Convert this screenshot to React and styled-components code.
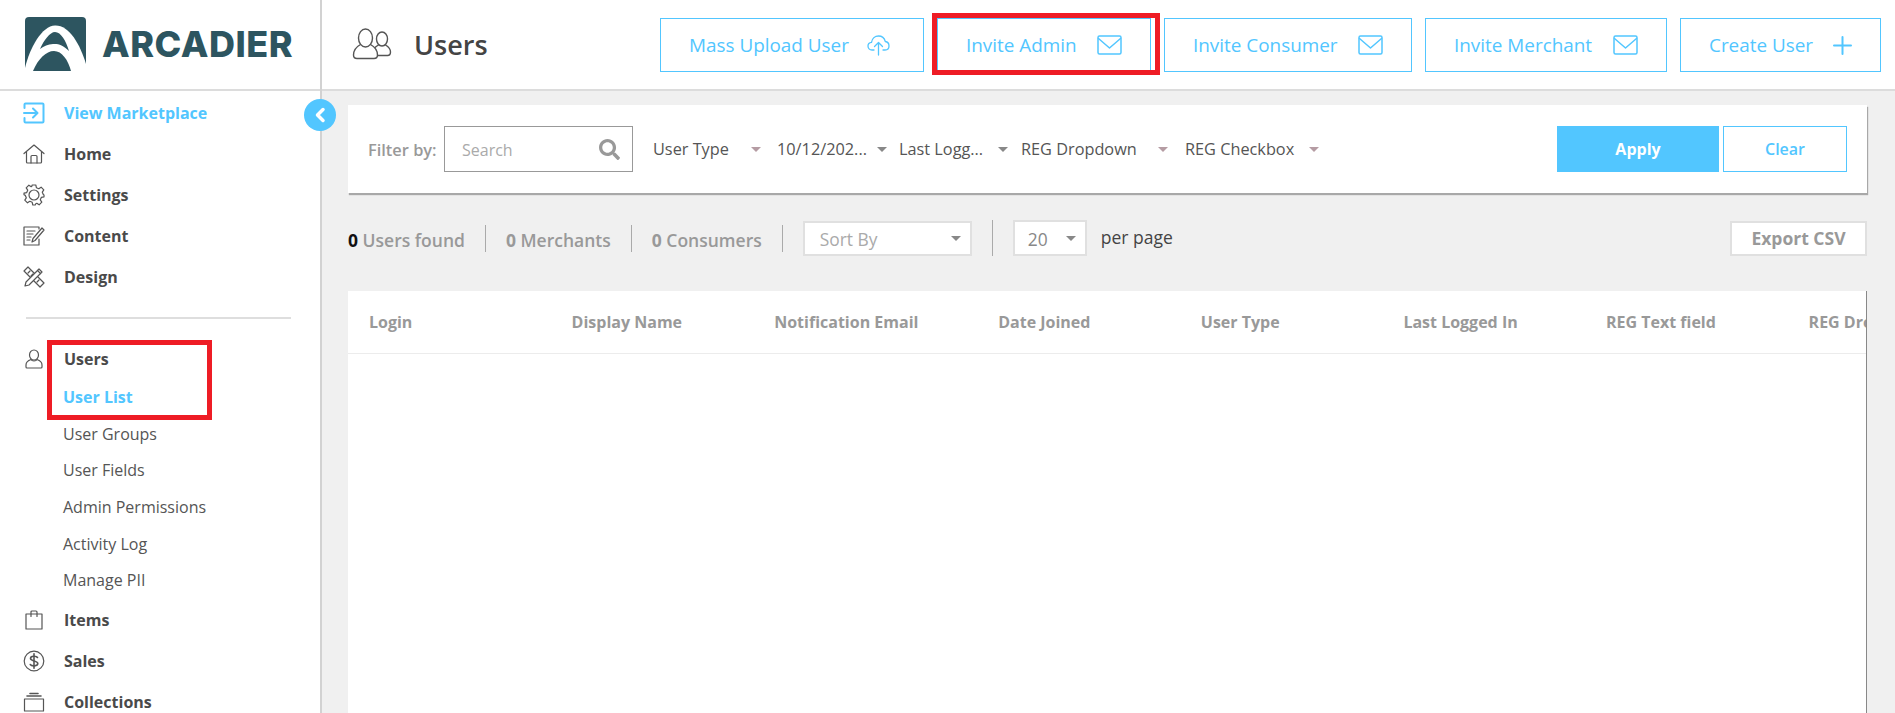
import React from 'react';
import styled, { createGlobalStyle } from 'styled-components';
import { FaSearch } from 'react-icons/fa';

const BLUE = '#52c6ff';

const GlobalStyle = createGlobalStyle`
  html, body {
    margin: 0;
    padding: 0;
    height: 100%;
    overflow: hidden;
    background: #f0f0f0;
    font-family: "Open Sans", "Liberation Sans", sans-serif;
  }
`;

const Page = styled.div`
  position: relative;
  display: grid;
  grid-template-columns: 322px 1fr;
  width: 1895px;
  height: 713px;
  overflow: hidden;
`;

const Sidebar = styled.aside`
  background: #fff;
  border-right: 2px solid #d2d2d2;
  box-sizing: border-box;
  overflow: hidden;
`;

const LogoBar = styled.div`
  display: flex;
  align-items: center;
  gap: 16px;
  height: 91px;
  padding: 0 0 1px 25px;
  box-sizing: border-box;
  border-bottom: 2px solid #dcdcdc;
`;

const LogoText = styled.span`
  font-family: Inter, "Liberation Sans", sans-serif;
  font-size: 36px;
  font-weight: 800;
  letter-spacing: 0.5px;
  color: #2d5560;
  line-height: 1;
`;

const Nav = styled.nav`
  display: flex;
  flex-direction: column;
  padding-top: 1px;
`;

const NavRow = styled.div`
  display: flex;
  align-items: center;
  height: 41px;
  font-size: 16px;
  font-weight: 700;
  color: ${props => (props.$active ? BLUE : '#4a4a4a')};
`;

const NavIcon = styled.span`
  display: flex;
  justify-content: center;
  width: 40px;
  margin: 0 10px 0 14px;
  color: ${props => (props.$active ? BLUE : '#555')};
`;

const Divider = styled.div`
  height: 2px;
  margin: 20px 29px 19px 26px;
  background: #dedede;
`;

const SubList = styled.div`
  display: flex;
  flex-direction: column;
  margin: 0 0 1px;
`;

const SubRow = styled.div`
  display: flex;
  align-items: center;
  height: 36.6px;
  padding-left: 63px;
  font-size: 16px;
  font-weight: ${props => (props.$active ? 700 : 400)};
  color: ${props => (props.$active ? BLUE : '#555')};
`;

const Main = styled.main`
  display: flex;
  flex-direction: column;
  min-width: 0;
`;

const TopBar = styled.header`
  display: flex;
  align-items: center;
  height: 91px;
  padding: 0 14px 1px 30px;
  box-sizing: border-box;
  background: #fff;
  border-bottom: 2px solid #dcdcdc;
  color: #555;
`;

const PageTitle = styled.h1`
  margin: 0 0 0 22px;
  font-size: 27px;
  font-weight: 600;
  color: #444;
`;

const TopActions = styled.div`
  display: flex;
  gap: 13px;
  margin-left: auto;
  padding-top: 1px;
`;

const OutlineButton = styled.button`
  display: flex;
  align-items: center;
  justify-content: space-between;
  width: ${props => props.$w}px;
  height: 54px;
  padding: 1px ${props => props.$pr || 28}px 0 28px;
  box-sizing: border-box;
  background: #fff;
  border: 1px solid ${BLUE};
  font-family: inherit;
  font-size: 18.9px;
  color: ${BLUE};
`;

const Content = styled.div`
  display: flex;
  flex-direction: column;
  flex: 1;
  padding: 14px 28px 0 26px;
`;

const FilterPanel = styled.section`
  display: flex;
  align-items: center;
  height: 88px;
  padding: 0 20px;
  box-sizing: border-box;
  background: #fff;
  box-shadow: 1px 2px 1px #a8a8a8;
`;

const FilterLabel = styled.span`
  width: 76px;
  font-size: 16.4px;
  font-weight: 600;
  color: #999;
`;

const SearchBox = styled.div`
  display: flex;
  align-items: center;
  justify-content: space-between;
  width: 189px;
  height: 46px;
  margin-right: 20px;
  padding: 1px 12px 0 17px;
  box-sizing: border-box;
  border: 1px solid #999;
  font-size: 16px;
  color: #aaa;
  svg {
    color: #999;
    font-size: 21px;
  }
`;

const FilterSelect = styled.div`
  display: flex;
  align-items: center;
  width: ${props => props.$w}px;
  font-size: 16.3px;
  color: #555;
  span:first-child {
    width: ${props => props.$text}px;
    white-space: nowrap;
  }
`;

const Caret = styled.i`
  display: block;
  width: 0;
  height: 0;
  border-left: 5px solid transparent;
  border-right: 5px solid transparent;
  border-top: 5px solid ${props => props.$color || '#888'};
`;

const FilterButtons = styled.div`
  display: flex;
  gap: 4px;
  margin-left: auto;
`;

const ApplyButton = styled.button`
  width: 162px;
  height: 46px;
  border: none;
  background: ${BLUE};
  color: #fff;
  font-family: inherit;
  font-size: 16px;
  font-weight: 700;
`;

const ClearButton = styled.button`
  width: 124px;
  height: 46px;
  background: #fff;
  border: 1px solid ${BLUE};
  box-sizing: border-box;
  color: ${BLUE};
  font-family: inherit;
  font-size: 16px;
  font-weight: 600;
`;

const StatsBar = styled.div`
  display: flex;
  align-items: center;
  height: 36px;
  margin-top: 27px;
`;

const Stat = styled.span`
  margin-top: 4px;
  font-size: 17.5px;
  font-weight: 600;
  color: #999;
  b {
    font-weight: 700;
    color: ${props => (props.$dark ? '#111' : '#999')};
  }
`;

const VLine = styled.span`
  width: 1px;
  height: ${props => props.$h}px;
  margin: 0 ${props => props.$gap}px;
  background: #aaa;
`;

const Dropdown = styled.div`
  display: flex;
  align-items: center;
  justify-content: space-between;
  width: ${props => props.$w}px;
  height: ${props => props.$h}px;
  padding: 1px 9px 0 ${props => props.$pad}px;
  box-sizing: border-box;
  background: #fff;
  border: 2px solid #e0e0e0;
  font-size: 17.4px;
  color: ${props => props.$color || '#aaa'};
`;

const PerPage = styled.span`
  margin-left: 14px;
  margin-top: -2px;
  font-size: 17.5px;
  font-weight: 500;
  color: #444;
`;

const ExportButton = styled.button`
  width: 137px;
  height: 35px;
  margin-left: auto;
  background: #fff;
  border: 2px solid #e0e0e0;
  font-family: inherit;
  font-size: 17.5px;
  font-weight: 700;
  color: #999;
`;

const TablePanel = styled.section`
  flex: 1;
  margin-top: 35px;
  background: #fff;
  border-right: 1px solid #888;
  overflow: hidden;
`;

const TableHead = styled.div`
  display: grid;
  grid-template-columns: 202.6px 202.6px 224px repeat(5, 202.6px);
  align-items: center;
  height: 62px;
  padding-left: 21px;
  border-bottom: 1px solid #ececec;
  font-size: 16px;
  font-weight: 700;
  color: #999;
  white-space: nowrap;
`;

const RedBox = styled.div`
  position: absolute;
  left: ${props => props.$x}px;
  top: ${props => props.$y}px;
  width: ${props => props.$w}px;
  height: ${props => props.$h}px;
  box-sizing: border-box;
  border: 5px solid #ee1c25;
  pointer-events: none;
`;

const CollapseToggle = styled.div`
  position: absolute;
  left: 304px;
  top: 99px;
  display: flex;
  align-items: center;
  justify-content: center;
  width: 32px;
  height: 32px;
  border-radius: 50%;
  background: ${BLUE};
`;

const Line = ({ size = 26, w, h, sw = 1.2, children }) => (
  <svg
    width={w || size}
    height={h || size}
    viewBox={`0 0 ${w || size} ${h || size}`}
    fill="none"
    stroke="currentColor"
    strokeWidth={sw}
    strokeLinecap="round"
    strokeLinejoin="round"
  >
    {children}
  </svg>
);

const LogoMark = () => (
  <svg width="61" height="54" viewBox="0 0 61 54">
    <path d="M4 0H57Q61 0 61 4V54H0V4Q0 0 4 0Z" fill="#2d5560" />
    <path d="M0 51C5 30 17 9 30 8.500C44 8 55 27 61 47V54H0Z" fill="#fff" />
    <path d="M15 32C19 23 25 15 30 15C36 15 41 24 44 34C38 28 33 26.500 28 27C23 27.500 19 29 15 32Z" fill="#2d5560" />
    <path d="M8 54C13 42 21 34 29 34C37 34 43 43 46 54Z" fill="#2d5560" />
  </svg>
);

const MarketIcon = () => (
  <Line w={22} h={22} sw={2}>
    <path d="M1.500 6V2.500Q1.500 1.500 2.500 1.500H19.500Q20.500 1.500 20.500 2.500V19.500Q20.500 20.500 19.500 20.500H2.500Q1.500 20.500 1.500 19.500V16" />
    <path d="M1 11H14M10 6.500L14.500 11L10 15.500" />
  </Line>
);

const HomeIcon = () => (
  <Line w={22} h={20}>
    <path d="M1 9.500L11 1L21 9.500M3.500 7.500V18Q3.500 19 4.500 19H17.500Q18.500 19 18.500 18V7.500" />
    <path d="M8 19V12.500Q8 11.500 9 11.500H13Q14 11.500 14 12.500V19" />
  </Line>
);

const GearIcon = () => (
  <Line size={22}>
    <circle cx="11" cy="11" r="5" />
    <path d="M9.200 1H12.800L13.400 3.700L15.800 4.700L18.100 3.200L20.800 5.900L19.300 8.200L20.300 10.600L21 11V12.800L18.300 13.400L17.300 15.800L18.800 18.100L16.100 20.800L13.800 19.300L12.800 19.700L12.200 21H9.800L9.200 18.300L6.800 17.300L4.500 18.800L1.800 16.100L3.300 13.800L2.300 11.400L1 10.800V9.200L3.700 8.600L4.700 6.200L3.200 3.900L5.900 1.200L8.200 2.700L8.800 2.300Z" />
  </Line>
);

const ContentIcon = () => (
  <Line w={22} h={20}>
    <path d="M16 13V19H1V1H16V3" />
    <path d="M4 5H12M4 8H10M4 11H8M4 14H7" />
    <path d="M9 16L10 12.500L19 2L21 4L12 14.500Z" />
  </Line>
);

const DesignIcon = () => (
  <Line w={22} h={22}>
    <path d="M1 5L5 1L21 17L17 21Z" />
    <path d="M5 7L7 5M8 10L10 8M11 13L13 11M14 16L16 14" />
    <path d="M3 16L16 3L19 6L6 19L2 20Z" fill="#fff" />
    <path d="M14.500 4.500L17.500 7.500" />
  </Line>
);

const UserIcon = () => (
  <Line w={18} h={20}>
    <ellipse cx="9" cy="6" rx="4.500" ry="5" />
    <path d="M6 10.500C3 11.500 1 13 1 16V18Q1 19 2 19H16Q17 19 17 18V16C17 13 15 11.500 12 10.500C11 12.500 7 12.500 6 10.500Z" />
  </Line>
);

const BagIcon = () => (
  <Line w={18} h={20}>
    <path d="M1 4H17V19H1Z" />
    <path d="M6 6.500V2Q6 1 7 1H11Q12 1 12 2V6.500" />
  </Line>
);

const DollarIcon = () => (
  <Line size={22}>
    <circle cx="11" cy="11" r="9.800" />
    <path d="M14.500 7.500C13.500 5.800 7.500 5.500 7.500 8.500C7.500 11.500 14.800 10.300 14.800 13.500C14.800 16.500 8.500 16.500 7.300 14.500" strokeWidth="1.600" />
    <path d="M11 3.800V18.200" strokeWidth="1.600" />
  </Line>
);

const CollectionIcon = () => (
  <Line w={22} h={20}>
    <path d="M1.500 7H20.500V19H1.500Z" />
    <path d="M4 4H18M7 1.500H15" strokeWidth="1.600" />
  </Line>
);

const UsersTitleIcon = () => (
  <Line w={40} h={32} sw={1.400}>
    <ellipse cx="13.500" cy="10" rx="7" ry="9" />
    <path d="M8.500 16.500C4 19 1.500 22 1.500 27Q1.500 30.500 5 30.500H22Q25.500 30.500 25.500 27C25.500 22 23 19 18.500 16.500" />
    <ellipse cx="30" cy="11" rx="5.500" ry="7" />
    <path d="M33.500 17C37 19 38.500 21 38.500 24Q38.500 27.500 35.500 27.500H26M26.500 17C25 17.800 24 18.500 23 19.500" />
  </Line>
);

const CloudIcon = () => (
  <Line w={23} h={21} sw={1.300}>
    <path d="M7 15H5C2.500 15 1 13 1 11C1 9 2.500 7.500 4.500 7.300C5 3.500 8 1 11.500 1C15 1 17.500 3.500 18.300 6.500C20.500 6.800 22 8.500 22 11C22 13.200 20.500 15 18 15H16" />
    <path d="M11.500 20V8M7.500 11.500L11.500 7.500L15.500 11.500" />
  </Line>
);

const MailIcon = () => (
  <Line w={25} h={20} sw={1.500}>
    <rect x="1" y="1" width="23" height="18" rx="1.500" />
    <path d="M1.500 3.500L12.500 13L23.500 3.500" />
  </Line>
);

const PlusIcon = () => (
  <Line size={19} sw={2}>
    <path d="M9.500 1V18M1 9.500H18" />
  </Line>
);

const topLinks = [
  { label: 'Home', icon: <HomeIcon /> },
  { label: 'Settings', icon: <GearIcon /> },
  { label: 'Content', icon: <ContentIcon /> },
  { label: 'Design', icon: <DesignIcon /> },
];

const userLinks = ['User Groups', 'User Fields', 'Admin Permissions', 'Activity Log', 'Manage PII'];

const bottomLinks = [
  { label: 'Items', icon: <BagIcon /> },
  { label: 'Sales', icon: <DollarIcon /> },
  { label: 'Collections', icon: <CollectionIcon /> },
];

const actions = [
  { label: 'Mass Upload User', w: 264, pr: 33, icon: <CloudIcon /> },
  { label: 'Invite Admin', w: 214, icon: <MailIcon /> },
  { label: 'Invite Consumer', w: 248, icon: <MailIcon /> },
  { label: 'Invite Merchant', w: 242, icon: <MailIcon /> },
  { label: 'Create User', w: 201, icon: <PlusIcon /> },
];

const filters = [
  { label: 'User Type', w: 124, text: 98, caret: '#b59ca3' },
  { label: '10/12/202...', w: 122, text: 100 },
  { label: 'Last Logg...', w: 122, text: 99 },
  { label: 'REG Dropdown', w: 164, text: 137, caret: '#b59ca3' },
  { label: 'REG Checkbox', w: 140, text: 124, caret: '#b59ca3' },
];

const columns = [
  'Login',
  'Display Name',
  'Notification Email',
  'Date Joined',
  'User Type',
  'Last Logged In',
  'REG Text field',
  'REG Dropdown',
];

const App = () => (
  <Page>
    <GlobalStyle />
    <Sidebar>
      <LogoBar>
        <LogoMark />
        <LogoText>ARCADIER</LogoText>
      </LogoBar>
      <Nav>
        <NavRow $active>
          <NavIcon $active><MarketIcon /></NavIcon>
          View Marketplace
        </NavRow>
        {topLinks.map(link => (
          <NavRow key={link.label}>
            <NavIcon>{link.icon}</NavIcon>
            {link.label}
          </NavRow>
        ))}
        <Divider />
        <NavRow>
          <NavIcon><UserIcon /></NavIcon>
          Users
        </NavRow>
        <SubList>
          <SubRow $active>User List</SubRow>
          {userLinks.map(link => (
            <SubRow key={link}>{link}</SubRow>
          ))}
        </SubList>
        {bottomLinks.map(link => (
          <NavRow key={link.label}>
            <NavIcon>{link.icon}</NavIcon>
            {link.label}
          </NavRow>
        ))}
      </Nav>
    </Sidebar>

    <Main>
      <TopBar>
        <UsersTitleIcon />
        <PageTitle>Users</PageTitle>
        <TopActions>
          {actions.map(action => (
            <OutlineButton key={action.label} $w={action.w} $pr={action.pr}>
              {action.label}
              {action.icon}
            </OutlineButton>
          ))}
        </TopActions>
      </TopBar>

      <Content>
        <FilterPanel>
          <FilterLabel>Filter by:</FilterLabel>
          <SearchBox>
            Search
            <FaSearch />
          </SearchBox>
          {filters.map(filter => (
            <FilterSelect key={filter.label} $w={filter.w} $text={filter.text}>
              <span>{filter.label}</span>
              <Caret $color={filter.caret} />
            </FilterSelect>
          ))}
          <FilterButtons>
            <ApplyButton>Apply</ApplyButton>
            <ClearButton>Clear</ClearButton>
          </FilterButtons>
        </FilterPanel>

        <StatsBar>
          <Stat $dark><b>0</b> Users found</Stat>
          <VLine $h={27} $gap={20} />
          <Stat><b>0</b> Merchants</Stat>
          <VLine $h={27} $gap={20} />
          <Stat><b>0</b> Consumers</Stat>
          <VLine $h={27} $gap={20} />
          <Dropdown $w={169} $h={35} $pad={15}>
            Sort By
            <Caret />
          </Dropdown>
          <VLine $h={36} $gap={20} />
          <Dropdown $w={74} $h={36} $pad={13} $color="#888">
            20
            <Caret />
          </Dropdown>
          <PerPage>per page</PerPage>
          <ExportButton>Export CSV</ExportButton>
        </StatsBar>

        <TablePanel>
          <TableHead>
            {columns.map(col => (
              <span key={col}>{col}</span>
            ))}
          </TableHead>
        </TablePanel>
      </Content>
    </Main>

    <CollapseToggle>
      <svg width="12" height="16" viewBox="0 0 12 16" fill="none" stroke="#fff" strokeWidth="3.500" strokeLinecap="round" strokeLinejoin="round">
        <path d="M9 2.500L3.500 8L9 13.500" />
      </svg>
    </CollapseToggle>
    <RedBox $x={47} $y={340} $w={165} $h={80} />
    <RedBox $x={932} $y={13} $w={228} $h={62} />
  </Page>
);

export default App;
